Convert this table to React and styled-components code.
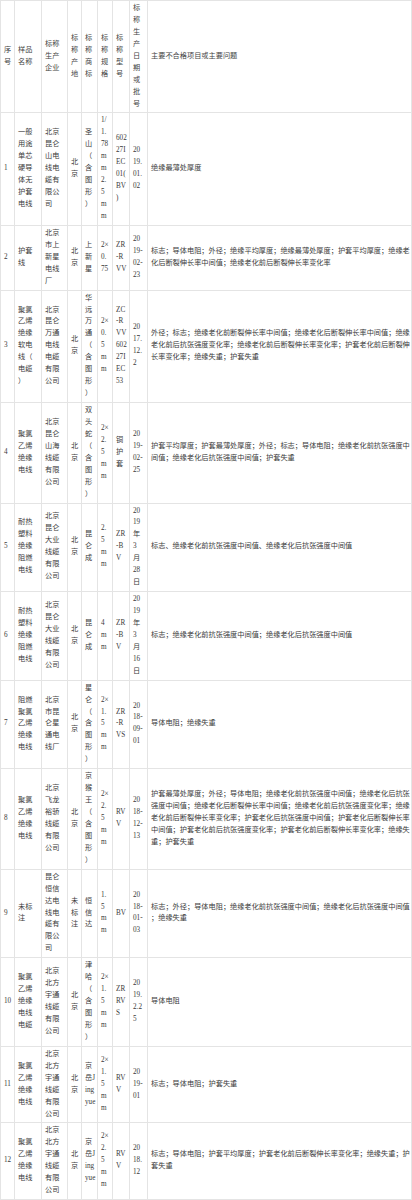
import React from "react";
import styled, { createGlobalStyle } from "styled-components";

const GlobalStyle = createGlobalStyle`
  body {
    margin: 0;
    background: #fff;
  }
`;

const widths = [14, 27, 26, 14, 16, 15, 17, 18, 264];

const head = [
  "序|号",
  "样品|名称",
  "标称|生产|企业",
  "标|称|产|地",
  "标|称|商|标",
  "标|称|规|格",
  "标|称|型|号",
  "标|称|生|产|日|期|或|批|号",
  "主要不合格项目或主要问题",
];

const rows = [
  [
    "1",
    "一般|用途|单芯|硬导|体无|护套|电线",
    "北京|昆仑|山电|线电|缆有|限公|司",
    "北|京",
    "圣|山|（|含|图|形|）",
    "1/|1.|78|m|m|2.|5|m|m",
    "602|27I|EC|01(|BV|)",
    "20|19.|01.|02",
    "绝缘最薄处厚度",
  ],
  [
    "2",
    "护套|线",
    "北京|市上|新星|电线|厂",
    "北|京",
    "上|新|星",
    "2×|0.|75",
    "ZR|-R|VV",
    "20|19-|02-|23",
    "标志；导体电阻；外径；绝缘平均厚度；绝缘最薄处厚度；护套平均厚度；绝缘老|化后断裂伸长率中间值；绝缘老化前后断裂伸长率变化率",
  ],
  [
    "3",
    "聚氯|乙烯|绝缘|软电|线（|电缆|）",
    "北京|昆仑|万通|电线|电缆|有限|公司",
    "北|京",
    "华|远|万|通|（|含|图|形|）",
    "2×|0.|5|m|m",
    "ZC|-R|VV|602|27I|EC|53",
    "20|17.|12.|2",
    "外径；标志；绝缘老化前断裂伸长率中间值；绝缘老化后断裂伸长率中间值；绝缘|老化前后抗张强度变化率；绝缘老化前后断裂伸长率变化率；护套老化前后断裂伸|长率变化率；绝缘失重；护套失重",
  ],
  [
    "4",
    "聚氯|乙烯|绝缘|电线",
    "北京|昆仑|山海|线缆|有限|公司",
    "北|京",
    "双|头|蛇|（|含|图|形|）",
    "2×|2.|5|m|m",
    "铜|护|套",
    "20|19-|02-|25",
    "护套平均厚度；护套最薄处厚度；外径；标志；导体电阻；绝缘老化前抗张强度中|间值；绝缘老化后抗张强度中间值；护套失重",
  ],
  [
    "5",
    "耐热|塑料|绝缘|阻燃|电线",
    "北京|昆仑|大业|线缆|有限|公司",
    "北|京",
    "昆|仑|成",
    "2.|5|m|m",
    "ZR|-B|V",
    "20|19|年|3|月|28|日",
    "标志、绝缘老化前抗张强度中间值、绝缘老化后抗张强度中间值",
  ],
  [
    "6",
    "耐热|塑料|绝缘|阻燃|电线",
    "北京|昆仑|大业|线缆|有限|公司",
    "北|京",
    "昆|仑|成",
    "4|m|m",
    "ZR|-B|V",
    "20|19|年|3|月|16|日",
    "标志；绝缘老化前抗张强度中间值；绝缘老化后抗张强度中间值",
  ],
  [
    "7",
    "阻燃|聚氯|乙烯|绝缘|电线",
    "北京|市昆|仑星|通电|线厂",
    "北|京",
    "星|仑|（|含|图|形|）",
    "2×|1.|5|m|m",
    "ZR|-R|VS",
    "20|18-|09-|01",
    "导体电阻；绝缘失重",
  ],
  [
    "8",
    "聚氯|乙烯|绝缘|电线",
    "北京|飞龙|裕骄|线缆|有限|公司",
    "北|京",
    "京|猴|王|（|含|图|形|）",
    "2×|2.|5|m|m",
    "RV|V",
    "20|18-|12-|13",
    "护套最薄处厚度；外径；导体电阻；绝缘老化前抗张强度中间值；绝缘老化后抗张|强度中间值；绝缘老化后断裂伸长率中间值；绝缘老化前后抗张强度变化率；绝缘|老化前后断裂伸长率变化率；护套老化后抗张强度中间值；护套老化后断裂伸长率|中间值；护套老化前后抗张强度变化率；护套老化前后断裂伸长率变化率；绝缘失|重；护套失重",
  ],
  [
    "9",
    "未标|注",
    "昆仑|恒信|达电|线电|缆有|限公|司",
    "未|标|注",
    "恒|信|达",
    "1.|5|m|m",
    "BV",
    "20|18-|01-|03",
    "标志；外径；导体电阻；绝缘老化前抗张强度中间值；绝缘老化后抗张强度中间值|；绝缘失重",
  ],
  [
    "10",
    "聚氯|乙烯|绝缘|电线|电缆",
    "北京|北方|宇通|线缆|有限|公司",
    "北|京",
    "津|哈|（|含|图|形|）",
    "2×|1.|5|m|m",
    "ZR|RV|S",
    "20|19.|2.2|5",
    "导体电阻",
  ],
  [
    "11",
    "聚氯|乙烯|绝缘|电线",
    "北京|北方|宇通|线缆|有限|公司",
    "北|京",
    "京|岳J|ing|yue",
    "2×|1.|5|m|m",
    "RV|V",
    "20|19-|01",
    "标志；导体电阻；护套失重",
  ],
  [
    "12",
    "聚氯|乙烯|绝缘|电线",
    "北京|北方|宇通|线缆|有限|公司",
    "北|京",
    "京|岳J|ing|yue",
    "2×|2.|5|m|m",
    "RV|V",
    "20|18.|12",
    "标志；导体电阻；护套平均厚度；护套老化前后断裂伸长率变化率；绝缘失重；护|套失重",
  ],
];

const Lines = ({ text }) =>
  text.split("|").map((t, i) => <Line key={i}>{t}</Line>);

const Report = () => {
  return (
    <React.Fragment>
      <GlobalStyle />
      <Table>
        <colgroup>
          {widths.map((w, i) => (
            <col key={i} style={{ width: w }} />
          ))}
        </colgroup>
        <thead>
          <tr>
            {head.map((h, i) => (
              <HeadCell key={i}>
                <Lines text={h} />
              </HeadCell>
            ))}
          </tr>
        </thead>
        <tbody>
          {rows.map((r, ri) => (
            <tr key={ri}>
              {r.map((c, ci) => (
                <Cell key={ci}>
                  <Lines text={c} />
                </Cell>
              ))}
            </tr>
          ))}
        </tbody>
      </Table>
    </React.Fragment>
  );
};

const Table = styled.table`
  width: 411px;
  table-layout: fixed;
  border-collapse: collapse;
  font-family: "Liberation Serif", "Noto Sans CJK SC", serif;
  font-size: 7.2px;
  line-height: 11.93px;
  color: #3a3a3a;
`;

const HeadCell = styled.th`
  border: 1px solid #e4e4e4;
  padding: 2px 3px;
  font-weight: normal;
  text-align: left;
  vertical-align: middle;
  color: #444;
`;

const Cell = styled.td`
  border: 1px solid #e4e4e4;
  padding: 2px 3px;
  text-align: left;
  vertical-align: middle;
`;

const Line = styled.span`
  display: block;
  white-space: nowrap;
`;

export default Report;
